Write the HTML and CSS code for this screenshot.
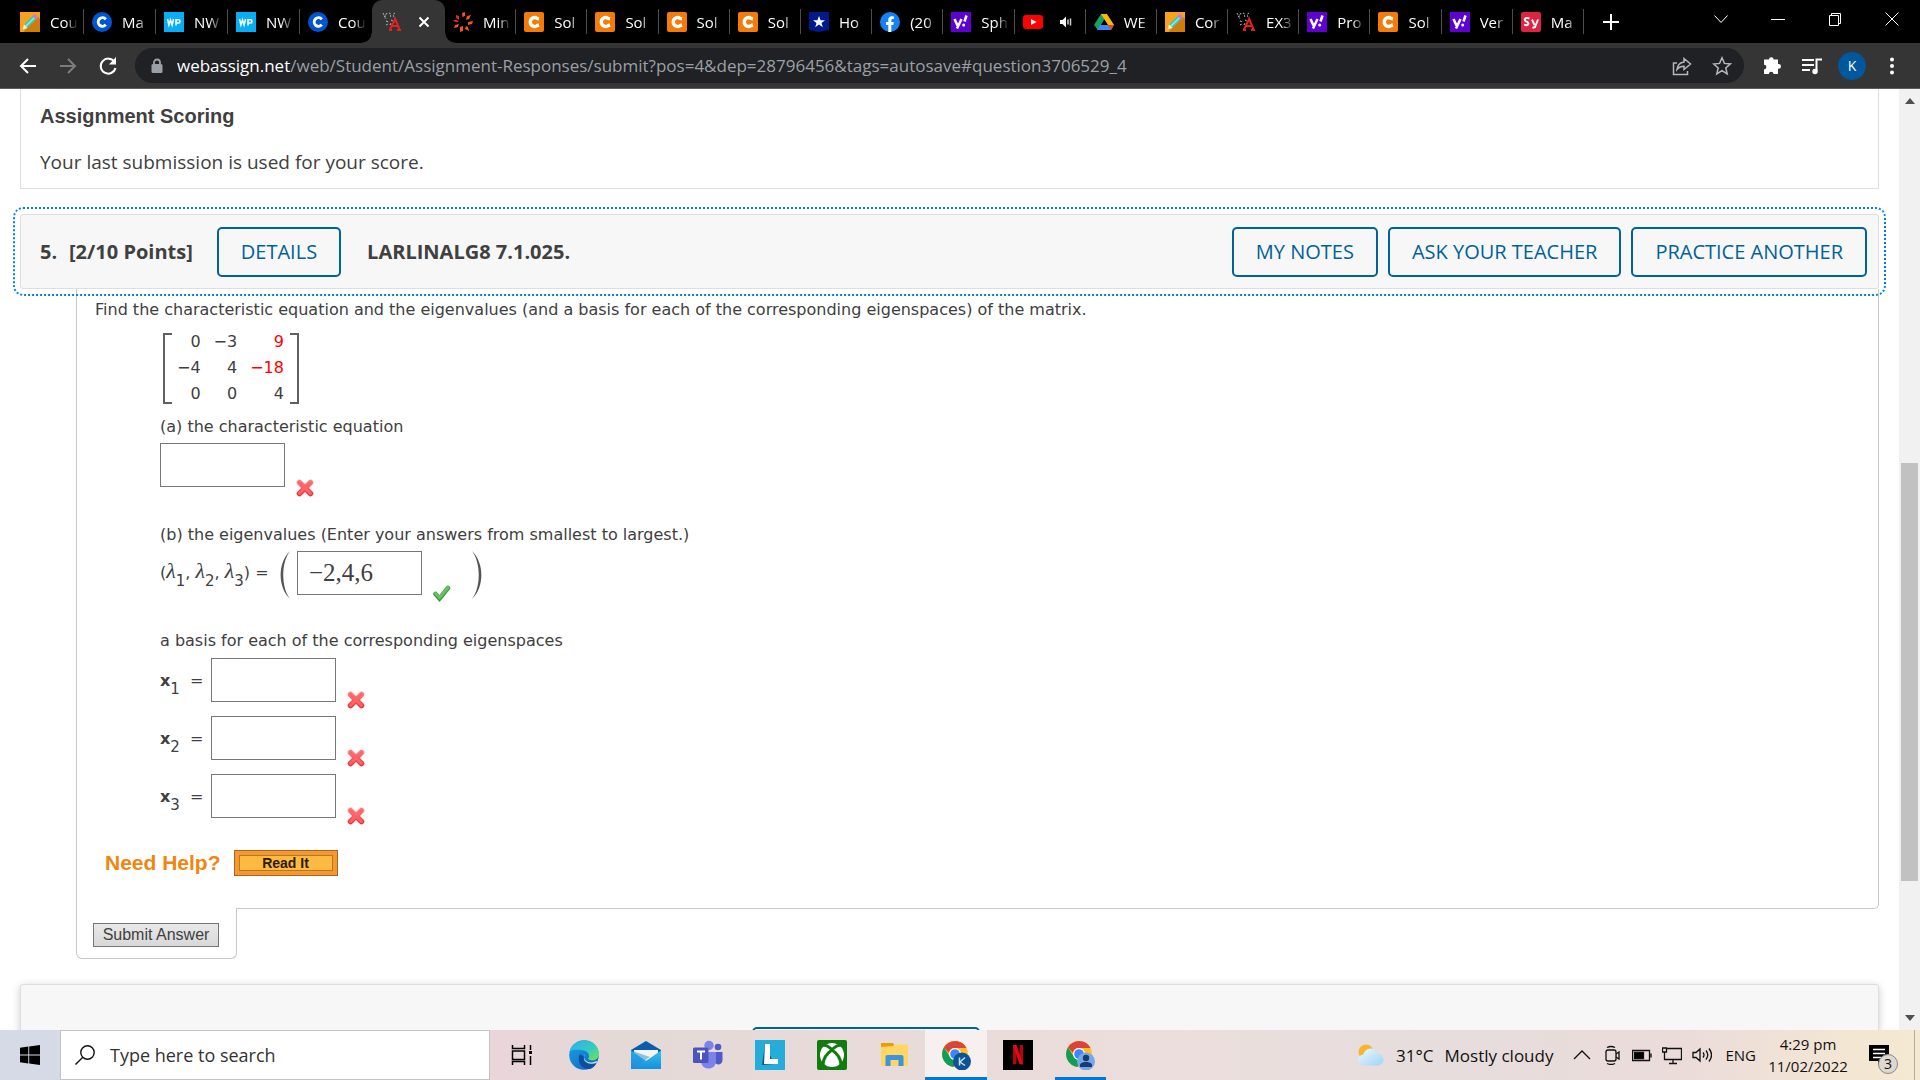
FILE: index.html
```html
<!DOCTYPE html>
<html lang="en">
<head>
<meta charset="utf-8">
<title>WebAssign</title>
<link rel="stylesheet" href="styles.css">
</head>
<body>
<svg class="sprite" aria-hidden="true">
  <defs>
    <linearGradient id="edgeGreen" x1="0" y1="0" x2="1" y2="1"><stop offset="0.1" stop-color="#2bb4e8"/><stop offset="0.6" stop-color="#38cdb8"/><stop offset="1" stop-color="#7be348"/></linearGradient>
    <linearGradient id="edgeBlue" x1="0" y1="0" x2="1" y2="1"><stop offset="0" stop-color="#1aa5e3"/><stop offset="1" stop-color="#0b5fc0"/></linearGradient>
    <linearGradient id="mailBlue" x1="0" y1="0" x2="0" y2="1"><stop offset="0" stop-color="#35c1f1"/><stop offset="1" stop-color="#1490df"/></linearGradient>
    <linearGradient id="redX" x1="0" y1="0" x2="0" y2="1"><stop offset="0" stop-color="#fb8383"/><stop offset="1" stop-color="#ee3036"/></linearGradient>
    <linearGradient id="cloudFill" x1="0" y1="0" x2="1" y2="1"><stop offset="0" stop-color="#eef9ff"/><stop offset="1" stop-color="#9ed3f5"/></linearGradient>
  </defs>
  <symbol id="i-pencil" viewBox="0 0 20 20"><path fill="#f9a11b" d="M0 0h20v20H0z"/><path fill="#cf7d08" d="M5 18 18 5l2 2v13H4z"/><path fill="#3fc6c0" d="m4 12.500 8.500-8.500 3.500 3.500-8.500 8.500z"/><path d="m5.500 14.500 8.700-8.700" stroke="#9ff0e4" stroke-width="1.200"/><path fill="#c77bd0" d="m12.500 4 1.500-1.500c1-1 4.500 2 3.500 3.500L16 7.500z"/><path fill="#fff0c8" d="m4 12.500-1.500 5L7.500 16z"/></symbol>
  <symbol id="i-ccircle" viewBox="0 0 20 20"><circle cx="10" cy="10" r="10" fill="#0056d2"/><path d="M13.800 7.300A4.300 4.300 0 1 0 13.800 12.700" fill="none" stroke="#fff" stroke-width="2.800"/></symbol>
  <symbol id="i-wp" viewBox="0 0 20 20"><path fill="#08aef5" d="M0 0h20v20H0z"/><path d="m3.500 7 1.400 6 1.600-5 1.600 5 1.500-6M12 13.500V7.800h2.400a1.600 1.600 0 0 1 0 3.200H12" fill="none" stroke="#fff" stroke-width="1.500"/></symbol>
  <symbol id="i-wa" viewBox="0 0 20 20"><g stroke="#bbb" fill="none" stroke-width="1" stroke-dasharray="2 1"><path d="m1 1 3 6M5 1 2 6M7 1c3 0 0 5 3 4M13 1c-3 1-1 5 0 5M4 9l3 1M9 8l2 1M4 13l2-1M8 13l1-2"/></g><path d="M8 17.500 13.200 7l4.300 10.500M9.500 14h7M7 18h3M15 18h4" fill="none" stroke="#e2231a" stroke-width="2"/></symbol>
  <symbol id="i-burst" viewBox="0 0 20 20"><g fill="#f0552a"><path d="m9 1 3-1v4L9.500 5zM14 4l4-1-2 4-3 1zM15 10l5-1-1 3-4 1zM13 14l2 1 1 4-4-2zM7 15l3-1v5l-3 1zM2 13l4-1-1 3-4 1z"/></g><path fill="#e0242c" d="m3 3 3 1 0 4-3-2zM0 8h4l2 2H2z"/></symbol>
  <symbol id="i-chegg" viewBox="0 0 20 20"><rect width="20" height="20" rx="2" fill="#f47b0a"/><path d="M15 6.800 13.300 6.500c-3-2.200-7 0-7 3.500s4 5.700 7 3.500L15 13" fill="none" stroke="#fff" stroke-width="3.400"/></symbol>
  <symbol id="i-star" viewBox="0 0 20 20"><path fill="#001a8c" d="M0 0h20v18l-10 2-10-2z"/><path fill="#fff" d="m10 4 1.600 4.200H16l-3.500 2.700 1.300 4.300L10 12.600l-3.800 2.600 1.300-4.300L4 8.200h4.400z"/></symbol>
  <symbol id="i-fb" viewBox="0 0 20 20"><circle cx="10" cy="10" r="10" fill="#1583f7"/><path fill="#fff" d="M8.300 20v-7H6v-3h2.300V8c0-2.600 1.400-3.800 3.600-3.800l1.900.2v2.500h-1.200c-1 0-1.300.6-1.300 1.300V10h2.500l-.4 3h-2.100v7z"/></symbol>
  <symbol id="i-yahoo" viewBox="0 0 20 20"><path fill="#5f01d1" d="M0 0h20v20H0z"/><path d="m3.500 7 3 6.500M10.500 7l-4.500 9.500M15.500 3.500l-2 6" fill="none" stroke="#fff" stroke-width="2.500"/><circle cx="12.700" cy="13" r="1.500" fill="#fff"/></symbol>
  <symbol id="i-yt" viewBox="0 0 20 20"><rect y="3" width="20" height="14" rx="3" fill="#f00"/><path fill="#fff" d="m8 7 5.500 3L8 13z"/></symbol>
  <symbol id="i-drive" viewBox="0 0 20 20"><path fill="#19a15f" d="M7 2h3l1 4-7 12L0 13z"/><path fill="#fbbc05" d="M7 2h6l7 11h-6z"/><path fill="#4285f4" d="M6 13h14l-3 5H3z"/><path fill="#ea4335" d="M14 13h6l-3 5z"/></symbol>
  <symbol id="i-sy" viewBox="0 0 20 20"><rect width="20" height="20" rx="2" fill="#df2343"/><path d="M8.500 6.500c-5-2-6 2-3 3s2.500 5-2.500 3.200M11 7.500l2.500 5.500M17 7.500l-3 7.500-2.500 1" fill="none" stroke="#fff" stroke-width="1.900"/></symbol>
  <symbol id="i-cross" viewBox="0 0 18 18"><path d="m3.500 3.500 11 11m0-11-11 11" stroke="url(#redX)" stroke-width="5.500" stroke-linecap="round"/><path d="m3.500 3.500 11 11m0-11-11 11" stroke="#ff6468" stroke-width="3" stroke-linecap="round"/></symbol>
  <symbol id="i-chrome" viewBox="0 0 30 30"><circle cx="14" cy="14" r="13" fill="#fbc02d"/><path fill="#db4437" d="M14 1a13 13 0 0 1 11.500 7H14a6 6 0 0 0-6 5L3 7.500A13 13 0 0 1 14 1z"/><path fill="#0f9d58" d="M3 7.300 9 17a6 6 0 0 0 7 2.600L12.500 27A13 13 0 0 1 3 7.300z"/><circle cx="14" cy="14" r="6" fill="#fff"/><circle cx="14" cy="14" r="4.800" fill="#4285f4"/></symbol>
</svg>

<header class="browser">
  <div class="tabstrip">
    <nav class="tabs" aria-label="Tabs">
      <div class="tab wide"><svg><use href="#i-pencil"/></svg><span>Cou</span></div>
      <div class="tab wide"><svg><use href="#i-ccircle"/></svg><span>Ma</span></div>
      <div class="tab wide"><svg><use href="#i-wp"/></svg><span>NW</span></div>
      <div class="tab wide"><svg><use href="#i-wp"/></svg><span>NW</span></div>
      <div class="tab wide last"><svg><use href="#i-ccircle"/></svg><span>Cou</span></div>
      <div class="tab active"><svg><use href="#i-wa"/></svg><button aria-label="Close tab"><svg class="close" viewBox="0 0 12 12"><path d="m1.500 1.500 9 9m0-9-9 9"/></svg></button></div>
      <div class="tab"><svg><use href="#i-burst"/></svg><span>Min</span></div>
      <div class="tab"><svg><use href="#i-chegg"/></svg><span>Sol</span></div>
      <div class="tab"><svg><use href="#i-chegg"/></svg><span>Sol</span></div>
      <div class="tab"><svg><use href="#i-chegg"/></svg><span>Sol</span></div>
      <div class="tab"><svg><use href="#i-chegg"/></svg><span>Sol</span></div>
      <div class="tab"><svg><use href="#i-star"/></svg><span>Ho</span></div>
      <div class="tab"><svg><use href="#i-fb"/></svg><span>(20</span></div>
      <div class="tab"><svg><use href="#i-yahoo"/></svg><span>Sph</span></div>
      <div class="tab"><svg><use href="#i-yt"/></svg><svg class="sound" viewBox="0 0 14 14"><path d="M1 5h2.500L7 1.500v11L3.500 9H1z" fill="#fff"/><path d="M9 4.500v5M11.500 3.500v7" stroke="#ccc" stroke-width="1.500"/></svg></div>
      <div class="tab"><svg><use href="#i-drive"/></svg><span>WE</span></div>
      <div class="tab"><svg><use href="#i-pencil"/></svg><span>Cor</span></div>
      <div class="tab"><svg><use href="#i-wa"/></svg><span>EX3</span></div>
      <div class="tab"><svg><use href="#i-yahoo"/></svg><span>Pro</span></div>
      <div class="tab"><svg><use href="#i-chegg"/></svg><span>Sol</span></div>
      <div class="tab"><svg><use href="#i-yahoo"/></svg><span>Ver</span></div>
      <div class="tab"><svg><use href="#i-sy"/></svg><span>Ma</span></div>
    </nav>
    <button class="newtab" aria-label="New tab"><svg viewBox="0 0 16 16"><path d="M8 0v16M0 8h16"/></svg></button>
    <div class="winctl">
      <button aria-label="Search tabs"><svg viewBox="0 0 16 16"><path d="m1.500 4.500 6.500 7 6.500-7"/></svg></button>
      <button aria-label="Minimize"><svg viewBox="0 0 16 16"><path d="M1 8.500h14"/></svg></button>
      <button aria-label="Restore"><svg viewBox="0 0 16 16"><path d="M2.500 4.500h9v10h-9zM4.500 4V2.500h9v10H12"/></svg></button>
      <button aria-label="Close"><svg viewBox="0 0 16 16"><path d="m1.500 1.500 13 13m0-13-13 13"/></svg></button>
    </div>
  </div>
  <div class="toolbar">
    <button aria-label="Back"><svg viewBox="0 0 20 20"><path d="M18 10H3m7-7-7 7 7 7"/></svg></button>
    <button aria-label="Forward" class="dim"><svg viewBox="0 0 20 20"><path d="M2 10h15m-7-7 7 7-7 7"/></svg></button>
    <button aria-label="Reload"><svg viewBox="0 0 20 20"><path d="M16.500 6a7.500 7.500 0 1 0 1 6"/><path d="M18 1v7.500h-7z" fill="#fff" stroke="none"/></svg></button>
    <div class="omnibox">
      <svg class="lock" viewBox="0 0 12 16"><path d="M3 7V4.500a3 3 0 0 1 6 0V7" fill="none" stroke="#9aa0a6" stroke-width="1.800"/><rect x="0.500" y="6" width="11" height="9" rx="1.500" fill="#9aa0a6"/></svg>
      <div class="url"><b>webassign.net</b>/web/Student/Assignment-Responses/submit?pos=4&amp;dep=28796456&amp;tags=autosave#question3706529_4</div>
      <button aria-label="Share"><svg viewBox="0 0 20 20"><path d="M5 7H1.500v11.500h14V15M12 2.500 18.500 8 12 13.500v-3.200c-3 0-5 .7-7 3.200.5-4 3-7 7-7.500z"/></svg></button>
      <button aria-label="Bookmark"><svg viewBox="0 0 20 20"><path d="m10 1.800 2.400 5.600 6 .5-4.600 4 1.400 6-5.200-3.200L4.800 18l1.400-6-4.600-4 6-.6z"/></svg></button>
    </div>
    <button aria-label="Extensions"><svg viewBox="0 0 20 20"><path fill="#fff" stroke="none" d="M7 3.500a2.300 2.300 0 0 1 4.600 0H16V8h.6a2.400 2.400 0 0 1 0 4.800H16V18h-4.500a2.300 2.300 0 0 0-4.600 0H2v-4.500a2.400 2.400 0 0 0 0-4.800V3.500z"/></svg></button>
    <button aria-label="Media"><svg viewBox="0 0 20 20"><path d="M0 4h12M0 9h12M0 14h8M14.500 15V3.500H20"/><circle cx="13" cy="15.500" r="2.700" fill="#fff" stroke="none"/></svg></button>
    <button class="avatar" aria-label="Profile">K</button>
    <button aria-label="Menu"><svg viewBox="0 0 20 20"><g fill="#fff" stroke="none"><circle cx="10" cy="3.500" r="2"/><circle cx="10" cy="10" r="2"/><circle cx="10" cy="16.500" r="2"/></g></svg></button>
  </div>
</header>

<div class="viewport">
  <main class="page">
    <section class="scoring">
      <h2>Assignment Scoring</h2>
      <p>Your last submission is used for your score.</p>
    </section>

    <section class="qhead">
      <span class="num">5.</span>
      <span class="points">[2/10 Points]</span>
      <button class="obtn">DETAILS</button>
      <span class="qtitle">LARLINALG8 7.1.025.</span>
      <div class="actions">
        <button class="obtn">MY NOTES</button>
        <button class="obtn">ASK YOUR TEACHER</button>
        <button class="obtn">PRACTICE ANOTHER</button>
      </div>
    </section>

    <form class="question">
      <div class="qbody">
        <p>Find the characteristic equation and the eigenvalues (and a basis for each of the corresponding eigenspaces) of the matrix.</p>
        <div class="parts">
          <div class="matrix">
            <i class="bracket open"></i>
            <table>
              <tr><td>0</td><td>−3</td><td class="rand">9</td></tr>
              <tr><td>−4</td><td>4</td><td class="rand">−18</td></tr>
              <tr><td>0</td><td>0</td><td>4</td></tr>
            </table>
            <i class="bracket shut"></i>
          </div>
          <label for="ceq">(a) the characteristic equation</label>
          <div class="answer first"><input id="ceq" type="text"><svg class="mark"><use href="#i-cross"/></svg></div>
          <p class="partb">(b) the eigenvalues (Enter your answers from smallest to largest.)</p>
          <div class="answer">
            <label class="lambdas" for="eig">(<i>λ</i><sub>1</sub>, <i>λ</i><sub>2</sub>, <i>λ</i><sub>3</sub>) =</label>
            <svg class="paren" viewBox="0 0 12 48"><path d="M11 0C-1.500 12-1.500 36 11 48 2 36 2 12 11 0z"/></svg>
            <input id="eig" type="text" value="−2,4,6">
            <svg class="mark" viewBox="0 0 18 18"><path d="m2.500 10 4 4.500L15 4" fill="none" stroke="#3c9a3f" stroke-width="4.500" stroke-linecap="round"/><path d="m2.500 9.500 4 4L15 3.500" fill="none" stroke="#6abf62" stroke-width="3" stroke-linecap="round"/></svg>
            <svg class="paren right" viewBox="0 0 12 48"><path d="M1 0c12.500 12 12.500 36 0 48 9-12 9-36 0-48z"/></svg>
          </div>
          <p class="partc">a basis for each of the corresponding eigenspaces</p>
          <div class="vectors">
            <div class="answer"><label for="x1"><b>x</b><sub>1</sub><span>=</span></label><input id="x1" type="text"><svg class="mark"><use href="#i-cross"/></svg></div>
            <div class="answer"><label for="x2"><b>x</b><sub>2</sub><span>=</span></label><input id="x2" type="text"><svg class="mark"><use href="#i-cross"/></svg></div>
            <div class="answer"><label for="x3"><b>x</b><sub>3</sub><span>=</span></label><input id="x3" type="text"><svg class="mark"><use href="#i-cross"/></svg></div>
          </div>
        </div>
        <div class="help"><strong>Need Help?</strong><button type="button">Read It</button></div>
      </div>
      <div class="submit"><button type="button">Submit Answer</button></div>
    </form>

    <section class="nexthead"><button class="obtn" aria-label="Details"></button></section>
  </main>
  <aside class="scrollbar">
    <svg viewBox="0 0 10 6"><path d="M0 6 5 0l5 6z"/></svg>
    <div class="track"><div class="thumb"></div></div>
    <svg viewBox="0 0 10 6"><path d="m0 0 5 6 5-6z"/></svg>
  </aside>
</div>

<footer class="taskbar">
  <button class="start" aria-label="Start"><svg viewBox="0 0 20 20"><path d="M0 2.800 8.300 1.600v8H0zM9.200 1.500 20 0v9.600H9.200zM0 10.500h8.300v8L0 17.300zM9.200 10.500H20V20L9.200 18.600z"/></svg></button>
  <label class="search"><svg viewBox="0 0 20 20"><circle cx="12.500" cy="7.500" r="6.700"/><path d="M7.800 12.300.500 19.500"/></svg><input type="text" placeholder="Type here to search"></label>
  <nav class="apps">
    <button aria-label="Task View"><svg class="line" viewBox="0 0 30 30"><path d="M5.500 5v3.500h12V5M5.500 25v-3.500h12V25M5.500 11h12v8.500h-12zM23.500 5v5M23.500 16v9"/><path d="M22 11h3v3h-3z" fill="#000" stroke="none"/></svg></button>
    <button aria-label="Edge"><svg viewBox="0 0 30 30"><circle cx="15" cy="15" r="14.800" fill="url(#edgeBlue)"/><path fill="url(#edgeGreen)" d="M1 11C4-3 29-4 30 14c0 6-7 8-11 5 3-4-1-9-7-9-5-.4-9 0-11 1z"/><path fill="#0c4fa0" d="M11 14c-4 8 2 16 10 15 3-1 5-3 6.500-6C21 26 14 22 15 17z"/><path fill="#e7dad9" d="M16 14c-3 4 1 9 7 8.500l5-1.500c0 1-.5 2-1 2-7 2-13-1-12-6z"/></svg></button>
    <button aria-label="Mail"><svg viewBox="0 0 30 30"><path fill="#0b5cad" d="M0 10 15 1l15 9v4H0z"/><path fill="#f4f4f4" d="M3 10h24v10H3z"/><path fill="url(#mailBlue)" d="M0 10.500 15 21 30 10.500V29H0z"/><path fill="#2489d8" d="M0 29 19 17 0 10.500z" opacity=".5"/></svg></button>
    <button aria-label="Teams"><svg viewBox="0 0 30 30"><circle cx="16" cy="5.500" r="4.700" fill="#7b83eb"/><circle cx="25" cy="7" r="3.300" fill="#5059c9"/><path fill="#5059c9" d="M20 12h9.500v8c0 5-6 6-8 2z"/><path fill="#7b83eb" d="M8 12h15v9c0 10-15 10-15 0z"/><rect y="7.500" width="15.500" height="15.500" rx="1.500" fill="#4b53bc"/><path d="M4 11.500h8M8 11.500v8" stroke="#fff" stroke-width="2"/></svg></button>
    <button aria-label="L"><svg viewBox="0 0 30 30"><path fill="#26acd9" d="M0 0h30v30H0z"/><path fill="#10548a" d="m10 4-3 21 12-1z"/><path fill="#fff" d="M10 4h5v15h8v5H9z"/></svg></button>
    <button aria-label="Xbox"><svg viewBox="0 0 30 30"><rect width="30" height="30" rx="2" fill="#107c10"/><circle cx="15" cy="15" r="12" fill="#fff"/><path d="M6 5.500c4-1 6 2 9 4 3-2 5-5 9-4M15 10C9 14 6 20 6 25M15 10c6 4 9 10 9 15" stroke="#107c10" stroke-width="3" fill="none"/></svg></button>
    <button aria-label="Files"><svg viewBox="0 0 30 30"><path fill="#e3a006" d="M2 3h12l2 4H2z"/><path fill="#ffd563" d="M2 7l12-1 2-1.500h13V26H2z"/><path fill="#3d94de" d="M6.500 26V17q0-2 2-2h14q2 0 2 2v9h-5v-6h-8v6z"/></svg></button>
    <button aria-label="Chrome" class="current"><svg viewBox="0 0 30 30"><use href="#i-chrome"/><circle cx="21" cy="21.500" r="9" fill="#0b5394"/><path d="M18.500 17.500v8M24 17.500l-5 4.500 5 3.500" stroke="#c9dcf0" stroke-width="1.500" fill="none"/></svg></button>
    <button aria-label="Netflix"><svg viewBox="0 0 30 30"><path d="M0 0h30v30H0z"/><path fill="#b20710" d="M10 5h3.500v19L10 24.500zM16.500 5H20v19.500l-3.500-.5z"/><path fill="#e50914" d="M10 5h3.500L20 24.500l-3.500-.5z"/></svg></button>
    <button aria-label="Chrome guest" class="running"><svg viewBox="0 0 30 30"><use href="#i-chrome"/><circle cx="21" cy="21.500" r="9" fill="#78a7e8"/><circle cx="21" cy="18" r="3.200" fill="#153b75"/><path fill="#153b75" d="M15 27v-2c0-4 12-4 12 0v2z"/></svg></button>
  </nav>
  <div class="tray">
    <svg class="weather" viewBox="0 0 26 22"><circle cx="8" cy="8" r="7.500" fill="#f7b42c"/><path fill="url(#cloudFill)" d="M6 21.500a5.500 5.500 0 0 1-.6-11C7.500 3 17 2.500 19 9.500c9 .5 8.500 12 0 12z"/></svg>
    <span class="temp">31°C</span><span class="sky">Mostly cloudy</span>
    <svg class="ti" viewBox="0 0 20 20"><path d="m2 14 8-8 8 8"/></svg>
    <svg class="ti" viewBox="0 0 20 20"><rect x="4" y="5" width="10" height="11" rx="2"/><path d="m14 9 3-2v7l-3-2M5 2.500q4-2 8 0M5 18.500q4 2 8 0"/></svg>
    <svg class="ti" viewBox="0 0 20 20"><path d="M.500 5.500h17v10h-17zM19 8.500v4"/><path d="M2.500 7.500h9v6h-9z" fill="#000"/></svg>
    <svg class="ti" viewBox="0 0 20 20"><path d="M4.500 3.500h15v11H2.500V9M11 15v4M7 18.500h8M.500 3v4h4V3zM2.500 7v8"/></svg>
    <svg class="ti" viewBox="0 0 20 20"><path d="M1 7.500h3L8 4v12l-4-3.500H1zM11 7.500q2 2.500 0 5M14 5.500q3.500 4.500 0 9M17 3.500q5 6.500 0 13"/></svg>
    <span class="lang">ENG</span>
    <time><span>4:29 pm</span><span>11/02/2022</span></time>
    <div class="notify"><svg viewBox="0 0 20 20"><path d="M0 0h20v16h-7l-4 4v-4H0z"/><path d="M4 4.500h12M4 8.500h12M4 12.500h8" stroke="#fff" stroke-width="1.300"/></svg><span>3</span></div>
  </div>
</footer>
</body>
</html>
```
FILE: styles.css
```css
* { box-sizing: border-box; }
html, body { height: 100%; }
body {
  margin: 0;
  display: flex;
  flex-direction: column;
  overflow: hidden;
  background: #fff;
  color: #404040;
  font-family: "Open Sans", "Noto Sans", sans-serif;
  font-size: 18px;
}
button, input { font: inherit; color: inherit; margin: 0; padding: 0; }
button { border: 0; background: none; }
p, h2 { margin: 0; }
svg { display: block; flex: none; }
.sprite { position: absolute; width: 0; height: 0; }

/* Browser chrome */
.browser { flex: none; color: #fff; }
.tabstrip { display: flex; height: 43px; background: #000; padding-left: 12px; }
.tabs { flex: 0 1 1572px; display: flex; min-width: 0; }
.tab {
  flex: 1 1 0;
  min-width: 0;
  display: flex;
  align-items: center;
  gap: 10px;
  padding-left: 8px;
  font-size: 15px;
  background: linear-gradient(#4d4d4d, #4d4d4d) right center / 1px 25px no-repeat;
}
.tab.wide { flex: 0 0 72px; }
.tab.last { background: none; }
.tab > svg { width: 20px; height: 20px; }
.tab span {
  white-space: nowrap;
  -webkit-mask-image: linear-gradient(90deg, #000 15px, transparent 28px);
  mask-image: linear-gradient(90deg, #000 15px, transparent 28px);
}
.tab.active {
  position: relative;
  flex: 0 0 73px;
  gap: 16px;
  padding-left: 10px;
  background: #353535;
  border-radius: 10px 10px 0 0;
}
.tab.active::before, .tab.active::after {
  content: "";
  position: absolute;
  bottom: 0;
  left: -10px;
  width: 10px;
  height: 10px;
  background: radial-gradient(circle at 0 0, transparent 9px, #353535 10px);
}
.tab.active::after { left: 100%; background: radial-gradient(circle at 100% 0, transparent 9px, #353535 10px); }
.tab .sound { width: 14px; height: 14px; margin-left: 6px; }
.close { width: 12px; height: 12px; stroke: #fff; stroke-width: 2; }
.newtab { width: 54px; display: grid; place-items: center; }
.newtab svg { width: 16px; height: 16px; stroke: #fff; stroke-width: 2; }
.winctl { margin-left: auto; display: flex; }
.winctl button { width: 57px; height: 37px; display: grid; place-items: center; }
.winctl svg { width: 16px; height: 16px; fill: none; stroke: #fff; stroke-width: 1; }
.toolbar {
  display: flex;
  align-items: center;
  height: 46px;
  padding: 0 8px;
  background: #353535;
  border-bottom: 1px solid #5c5c5c;
}
.toolbar button { width: 40px; height: 36px; display: grid; place-items: center; }
.toolbar svg { width: 20px; height: 20px; fill: none; stroke: #fff; stroke-width: 2; }
.toolbar .dim svg { stroke: #7d7d7d; }
.omnibox {
  flex: 1;
  min-width: 0;
  display: flex;
  align-items: center;
  height: 35px;
  margin: 0 8px 0 7px;
  padding: 0 2px 0 16px;
  border-radius: 18px;
  background: #202124;
}
.omnibox .lock { width: 12px; height: 16px; margin-right: 14px; stroke: none; }
.omnibox button svg { stroke: #b5b8bb; stroke-width: 1.5; }
.url { flex: 1; overflow: hidden; white-space: nowrap; color: #9aa0a6; font-size: 17px; }
.url b { font-weight: 400; color: #fff; }
.toolbar .avatar { width: 28px; height: 28px; margin: 0 6px; border-radius: 50%; background: #01579b; font-size: 14px; }

/* Page */
.viewport { flex: 1; min-height: 0; display: flex; overflow: hidden; }
.page { flex: 1; min-width: 0; padding: 0 20px; }
.scoring { height: 100px; padding: 14px 19px; border: 1px solid #dedede; border-top: 0; }
.scoring h2 { font: bold 20px/26px "Liberation Sans", Arial, sans-serif; }
.scoring p { margin-top: 20px; font-size: 19px; line-height: 26px; }
.qhead {
  display: flex;
  align-items: center;
  height: 75px;
  margin-top: 25px;
  padding: 0 11px 0 19px;
  border: 1px solid #dedede;
  border-radius: 3px;
  background: #f7f7f7;
  outline: 2px dotted #0080e0;
  outline-offset: 5px;
  font-size: 20px;
  font-weight: 700;
  position: relative;
}
.num { width: 29px; }
.points { margin-right: 24px; }
.qtitle { margin-left: 26px; }
.actions { display: flex; gap: 10px; margin-left: auto; }
.obtn {
  height: 50px;
  padding: 0 22px;
  border: 2px solid #006298;
  border-radius: 5px;
  color: #006298;
  font-weight: 500;
}
.question { margin-left: 56px; font-family: "DejaVu Sans", Verdana, sans-serif; font-size: 16px; line-height: 22px; }
.qbody { padding: 10px 18px 32px; border: 1px solid #c8c8c8; border-top: 0; border-radius: 0 0 5px 0; }
.parts { margin-left: 65px; }
.matrix { display: flex; align-items: center; gap: 11px; margin: 8px 0 9px; }
.matrix table { border-spacing: 0; text-align: right; }
.matrix td { height: 26px; padding: 0 0 0 13px; }
.matrix td:first-child { padding-left: 2px; }
.matrix .rand { color: #f00; }
.bracket { width: 9px; height: 71px; border: 2px solid #606060; margin-left: 3px; }
.bracket.open { border-right: 0; margin-right: -8px; }
.bracket.shut { border-left: 0; margin-left: -5px; }
.parts > label { display: block; }
.answer { display: flex; align-items: flex-end; }
.answer input {
  width: 125px;
  height: 44px;
  margin-bottom: 7px;
  padding: 0 11px;
  border: 1px solid #777;
  background: #fff;
  font: 25px "Liberation Serif", serif;
}
.answer.first { margin-top: 5px; }
.answer.first input { margin-bottom: 10px; }
.mark { width: 18px; height: 18px; margin-left: 11px; }
.partb { margin: 27px 0 5px; }
.partc { margin: 28px 0 6px; }
.answer label { align-self: flex-start; line-height: 44px; white-space: nowrap; }
.answer sub { font-size: 15px; line-height: 0; vertical-align: -8px; }
.lambdas { width: 119px; }
.lambdas i { font: italic 22px/20px "Liberation Serif", serif; }
.paren { align-self: flex-start; width: 12px; height: 48px; margin-right: 6px; fill: #555; }
.paren.right { margin: 0 0 0 20px; }
.vectors { display: grid; gap: 7px; }
.vectors label { width: 51px; line-height: 46px; }
.vectors span { margin-left: 10px; }
.help { display: flex; align-items: center; gap: 13px; margin: 25px 0 0 10px; font-family: "Liberation Sans", Arial, sans-serif; }
.help strong { color: #f0860f; font-size: 21px; }
.help button {
  width: 104px;
  height: 26px;
  border: 1px solid #a8671c;
  background: #fdba42;
  box-shadow: inset 0 0 0 4px #f7972f, inset 0 0 0 5px #b87722;
  color: #2b1a00;
  font-size: 14px;
  font-weight: bold;
}
.submit {
  width: 161px;
  margin-top: -1px;
  padding: 15px 16px 11px;
  background: #fff;
  border: 1px solid #c8c8c8;
  border-top: 0;
  border-radius: 0 0 6px 6px;
}
.submit button {
  display: block;
  width: 126px;
  height: 24px;
  border: 1px solid #767676;
  background: linear-gradient(#e9e9e9, #d8d8d8);
  font: 16px/20px "Liberation Sans", Arial, sans-serif;
}
.nexthead {
  display: flex;
  justify-content: center;
  height: 90px;
  margin-top: 25px;
  padding-top: 42px;
  border: 1px solid #dedede;
  border-radius: 3px;
  background: #f7f7f7;
  box-shadow: 0 2px 8px #0003;
}
.nexthead .obtn { width: 228px; margin-right: 167px; }
.scrollbar { flex: none; width: 21px; display: flex; flex-direction: column; align-items: center; padding: 9px 2px; background: #f1f1f1; }
.scrollbar svg { width: 10px; height: 6px; fill: #505050; }
.track { flex: 1; width: 100%; padding: 359px 0 134px; display: flex; }
.thumb { flex: 1; background: #c1c1c1; }

/* Taskbar */
.taskbar {
  flex: none;
  position: relative;
  display: flex;
  height: 50px;
  background: linear-gradient(90deg, #d6dae6 0, #e9d5da 26%, #e5d9d7 32%, #e8dbd9 48%, #ebdedd 62%, #e6dddc 75%, #ebdcda 88%, #f3e6d3 96%, #f4e9d2);
  color: #111;
}
.start { width: 60px; display: grid; place-items: center; background: #d6dae6; }
.start svg { width: 20px; height: 20px; }
.search { flex: 0 1 430px; display: flex; align-items: center; gap: 15px; padding-left: 14px; background: #fff; border: 1px solid #c4c4c4; }
.search svg { width: 20px; height: 20px; fill: none; stroke: #111; stroke-width: 1.400; }
.search input { flex: 1; min-width: 0; border: 0; outline: 0; background: none; }
.search input::placeholder { color: #333; opacity: 1; }
.apps { display: flex; padding-left: 1px; }
.apps button { width: 62px; display: grid; place-items: center; }
.apps svg { width: 30px; height: 30px; }
.apps .line { fill: none; stroke: #000; stroke-width: 1.500; }
.apps .current { background: #f6f1f0; box-shadow: inset 0 -3px #0078d7; }
.apps .running { background: linear-gradient(#0078d7, #0078d7) center bottom / 51px 3px no-repeat; }
.tray { margin-left: auto; display: flex; align-items: center; white-space: nowrap; border-right: 1px solid #b9ae9c; margin-right: 5px; }
.weather { width: 26px; height: 22px; margin-right: 12px; }
.temp { margin-right: 11px; font-size: 17px; }
.sky { margin-right: 19px; font-size: 17px; }
.ti { width: 20px; height: 20px; margin-right: 10px; fill: none; stroke: #111; stroke-width: 1.300; }
.lang { margin-left: 3px; font-size: 15px; }
time { display: grid; width: 104px; text-align: center; font-size: 15px; line-height: 22px; }
.notify { position: relative; margin: 0 25px 0 9px; }
.notify svg { width: 20px; height: 20px; }
.notify span { position: absolute; left: 9px; top: 9px; width: 20px; height: 20px; border: 1px solid #888; border-radius: 50%; background: #ddd9d0; font-size: 14px; line-height: 18px; text-align: center; }
```
